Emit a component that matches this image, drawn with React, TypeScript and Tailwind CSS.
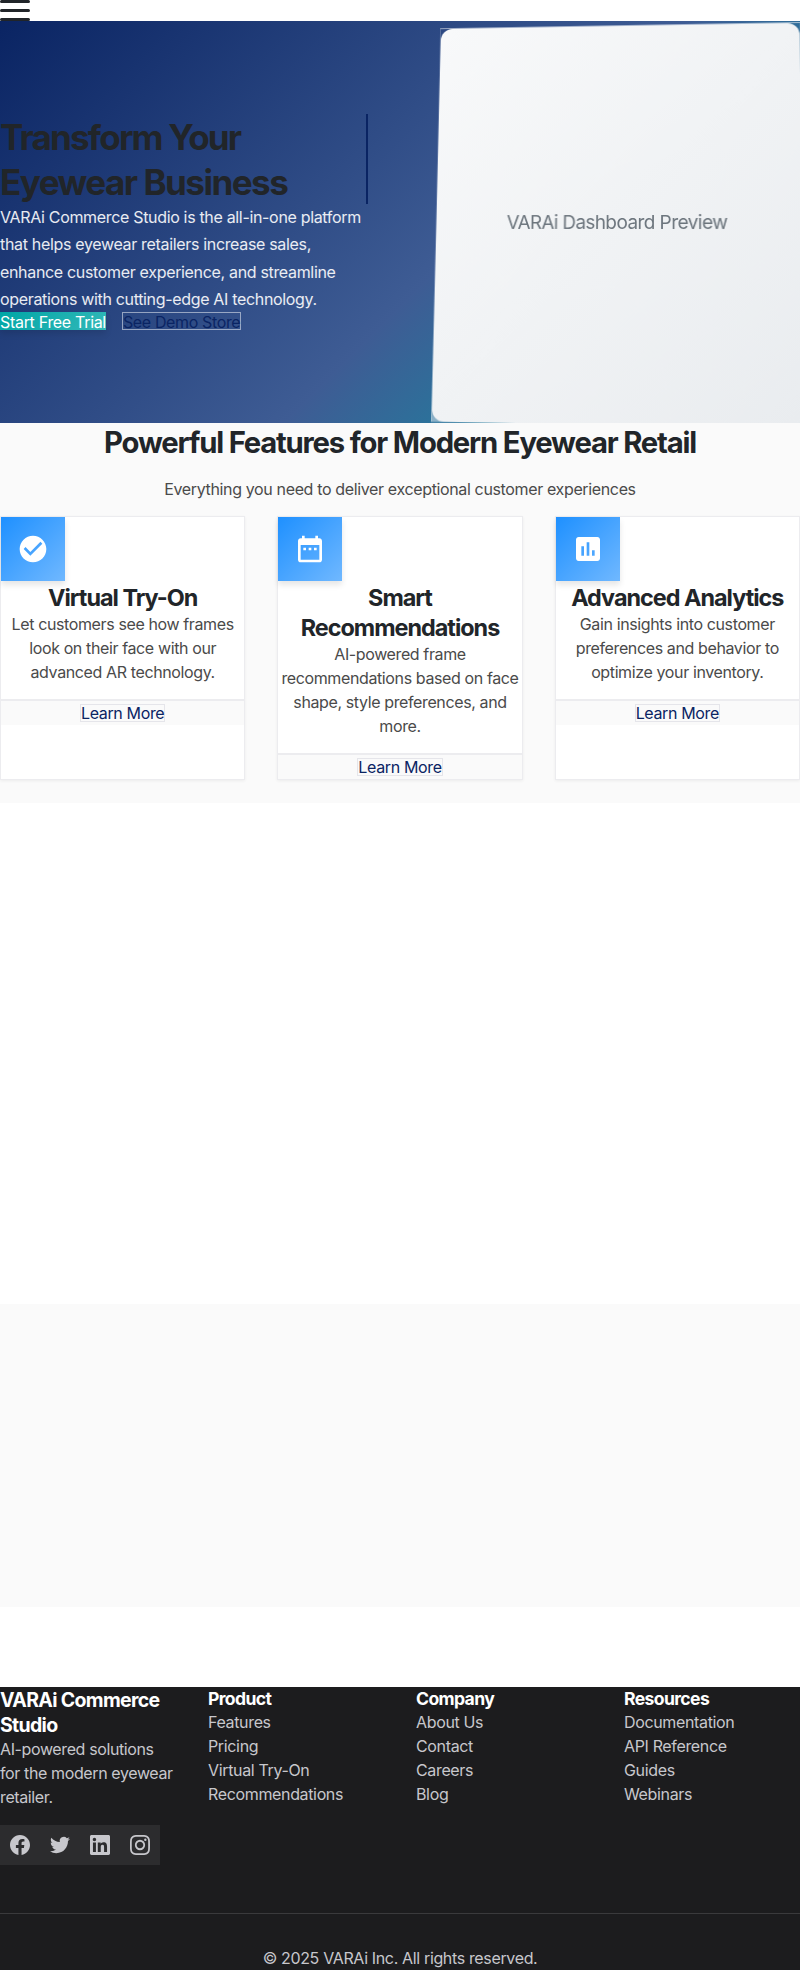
const features = [
  { title: ["Virtual Try-On"], text: ["Let customers see how frames", "look on their face with our", "advanced AR technology."], icon: "M12 2C6.48 2 2 6.48 2 12s4.48 10 10 10 10-4.48 10-10S17.52 2 12 2zm-2 15l-5-5 1.41-1.41L10 14.17l7.59-7.59L19 8l-9 9z" },
  { title: ["Smart", "Recommendations"], text: ["AI-powered frame", "recommendations based on face", "shape, style preferences, and", "more."], icon: "M9 11H7v2h2v-2zm4 0h-2v2h2v-2zm4 0h-2v2h2v-2zm2-7h-1V2h-2v2H8V2H6v2H5c-1.11 0-1.99.9-1.99 2L3 20c0 1.1.89 2 2 2h14c1.1 0 2-.9 2-2V6c0-1.1-.9-2-2-2zm0 16H5V9h14v11z" },
  { title: ["Advanced Analytics"], text: ["Gain insights into customer", "preferences and behavior to", "optimize your inventory."], icon: "M19 3H5c-1.1 0-2 .9-2 2v14c0 1.1.9 2 2 2h14c1.1 0 2-.9 2-2V5c0-1.1-.9-2-2-2zM9 17H7v-7h2v7zm4 0h-2V7h2v10zm4 0h-2v-4h2v4z" },
];

const columns = [
  { title: "Product", links: ["Features", "Pricing", "Virtual Try-On", "Recommendations"] },
  { title: "Company", links: ["About Us", "Contact", "Careers", "Blog"] },
  { title: "Resources", links: ["Documentation", "API Reference", "Guides", "Webinars"] },
];

const socials = [
  "M24 12.073c0-6.627-5.373-12-12-12s-12 5.373-12 12c0 5.99 4.388 10.954 10.125 11.854v-8.385H7.078v-3.47h3.047V9.43c0-3.007 1.792-4.669 4.533-4.669 1.312 0 2.686.235 2.686.235v2.953H15.83c-1.491 0-1.956.925-1.956 1.874v2.25h3.328l-.532 3.47h-2.796v8.385C19.612 23.027 24 18.062 24 12.073z",
  "M23.953 4.57a10 10 0 01-2.825.775 4.958 4.958 0 002.163-2.723c-.951.555-2.005.959-3.127 1.184a4.92 4.92 0 00-8.384 4.482C7.69 8.095 4.067 6.13 1.64 3.162a4.822 4.822 0 00-.666 2.475c0 1.71.87 3.213 2.188 4.096a4.904 4.904 0 01-2.228-.616v.06a4.923 4.923 0 003.946 4.827 4.996 4.996 0 01-2.212.085 4.936 4.936 0 004.604 3.417 9.867 9.867 0 01-6.102 2.105c-.39 0-.779-.023-1.17-.067a13.995 13.995 0 007.557 2.209c9.053 0 13.998-7.496 13.998-13.985 0-.21 0-.42-.015-.63A9.935 9.935 0 0024 4.59z",
  "M20.447 20.452h-3.554v-5.569c0-1.328-.027-3.037-1.852-3.037-1.853 0-2.136 1.445-2.136 2.939v5.667H9.351V9h3.414v1.561h.046c.477-.9 1.637-1.85 3.37-1.85 3.601 0 4.267 2.37 4.267 5.455v6.286zM5.337 7.433c-1.144 0-2.063-.926-2.063-2.065 0-1.138.92-2.063 2.063-2.063 1.14 0 2.064.925 2.064 2.063 0 1.139-.925 2.065-2.064 2.065zm1.782 13.019H3.555V9h3.564v11.452zM22.225 0H1.771C.792 0 0 .774 0 1.729v20.542C0 23.227.792 24 1.771 24h20.451C23.2 24 24 23.227 24 22.271V1.729C24 .774 23.2 0 22.222 0h.003z",
  "M12 0C8.74 0 8.333.015 7.053.072 5.775.132 4.905.333 4.14.63c-.789.306-1.459.717-2.126 1.384S.935 3.35.63 4.14C.333 4.905.131 5.775.072 7.053.012 8.333 0 8.74 0 12s.015 3.667.072 4.947c.06 1.277.261 2.148.558 2.913.306.788.717 1.459 1.384 2.126.667.666 1.336 1.079 2.126 1.384.766.296 1.636.499 2.913.558C8.333 23.988 8.74 24 12 24s3.667-.015 4.947-.072c1.277-.06 2.148-.262 2.913-.558.788-.306 1.459-.718 2.126-1.384.666-.667 1.079-1.335 1.384-2.126.296-.765.499-1.636.558-2.913.06-1.28.072-1.687.072-4.947s-.015-3.667-.072-4.947c-.06-1.277-.262-2.149-.558-2.913-.306-.789-.718-1.459-1.384-2.126C21.319 1.347 20.651.935 19.86.63c-.765-.297-1.636-.499-2.913-.558C15.667.012 15.26 0 12 0zm0 2.16c3.203 0 3.585.016 4.85.071 1.17.055 1.805.249 2.227.415.562.217.96.477 1.382.896.419.42.679.819.896 1.381.164.422.36 1.057.413 2.227.057 1.266.07 1.646.07 4.85s-.015 3.585-.074 4.85c-.061 1.17-.256 1.805-.421 2.227-.224.562-.479.96-.899 1.382-.419.419-.824.679-1.38.896-.42.164-1.065.36-2.235.413-1.274.057-1.649.07-4.859.07-3.211 0-3.586-.015-4.859-.074-1.171-.061-1.816-.256-2.236-.421-.569-.224-.96-.479-1.379-.899-.421-.419-.69-.824-.9-1.38-.165-.42-.359-1.065-.42-2.235-.045-1.26-.061-1.649-.061-4.844 0-3.196.016-3.586.061-4.861.061-1.17.255-1.814.42-2.234.21-.57.479-.96.9-1.381.419-.419.81-.689 1.379-.898.42-.166 1.051-.361 2.221-.421 1.275-.045 1.65-.06 4.859-.06l.045.03zm0 3.678a6.162 6.162 0 100 12.324 6.162 6.162 0 100-12.324zM12 16c-2.21 0-4-1.79-4-4s1.79-4 4-4 4 1.79 4 4-1.79 4-4 4zm7.846-10.405a1.441 1.441 0 11-2.88 0 1.441 1.441 0 012.88 0z",
];

function Lines({ lines }: { lines: string[] }) {
  return (
    <>
      {lines.map((l) => (
        <span key={l} className="block whitespace-nowrap">{l}</span>
      ))}
    </>
  );
}

export default function App() {
  return (
    <div className="h-[1986px] overflow-hidden bg-white font-['Inter','Liberation_Sans',sans-serif] text-base tracking-[-0.35px] text-[#4a4a4a]">
      <header className="flex h-[21px] flex-col justify-between">
        <span className="h-[3px] w-[30px] rounded-[3px] bg-[#212529]" />
        <span className="h-[3px] w-[30px] rounded-[3px] bg-[#212529]" />
        <span className="h-[3px] w-[30px] rounded-[3px] bg-[#212529]" />
      </header>

      <section className="grid h-[402px] grid-cols-2 items-center gap-16 overflow-hidden bg-[linear-gradient(135deg,#0a2463_0%,#3e5c94_57%,#00a6aa_100%)]">
        <div className="flex flex-col">
          <h1 className="h-[90px] border-r-2 border-[#0a2463] pt-px text-[35px] leading-[45px] font-bold tracking-[-1.5px] text-[#212529]">
            <span className="block tracking-[-1.8px]">Transform Your</span>
            <span className="block">Eyewear Business</span>
          </h1>
          <p className="-mb-[0.5px] pt-[0.5px] leading-[27.2px] tracking-[-0.33px] text-white/90">
            <Lines lines={["VARAi Commerce Studio is the all-in-one platform", "that helps eyewear retailers increase sales,", "enhance customer experience, and streamline", "operations with cutting-edge AI technology."]} />
          </p>
          <div className="flex gap-4 tracking-[-0.31px]">
            <a className="h-[18px] bg-[linear-gradient(135deg,#00a6a6,#33b8b8)] leading-5 text-white shadow-[0_4px_6px_rgba(0,0,0,0.1)]">Start Free Trial</a>
            <a className="h-[18px] border border-white/50 leading-[18px] tracking-[-0.36px] text-[#0a2463]">See Demo Store</a>
          </div>
        </div>
        <div className="h-[402px] border border-white/20 bg-[linear-gradient(to_top,rgba(255,255,255,0.45),transparent_50%)] [transform:perspective(1000px)_rotateY(-5deg)_rotateX(5deg)]">
          <div className="flex h-[400px] items-center justify-center rounded-xl bg-[linear-gradient(135deg,#f8f9fa,#e9ecef)] pt-[2px] text-[19px] tracking-[-0.58px] text-[#6c757d]">VARAi Dashboard Preview</div>
        </div>
      </section>

      <section className="h-[380px] bg-[#fafafa] text-center">
        <h2 className="pt-px text-[29.25px] leading-[38px] font-bold tracking-[-1.19px] text-[#212529]">Powerful Features for Modern Eyewear Retail</h2>
        <p className="pt-[15px] leading-6 tracking-[-0.36px]">Everything you need to deliver exceptional customer experiences</p>
        <div className="mt-[15px] grid h-[263px] grid-cols-3 gap-8">
          {features.map((f) => (
            <article key={f.title[0]} className="border border-[#ececef] bg-white shadow-[0_1px_3px_rgba(0,0,0,0.06)]">
              <div className="flex size-16 items-center justify-center bg-[linear-gradient(135deg,#1e90ff,#70b8ff)] text-white shadow-[0_4px_6px_rgba(0,0,0,0.1)]">
                <svg viewBox="0 0 24 24" className="size-8" fill="currentColor"><path d={f.icon} /></svg>
              </div>
              <h3 className="-mb-px pt-[2px] text-[23.4px] leading-[30px] font-bold tracking-[-1px] text-[#212529]"><Lines lines={f.title} /></h3>
              <p className="flex flex-col items-center leading-6 tracking-[-0.38px]"><Lines lines={f.text} /></p>
              <div className="mt-[15px] flex h-[26px] items-center justify-center border-t-2 border-[#ececef] bg-[#fafafa]">
                <a className="h-[18px] border border-[#e5e5ea] leading-[17px] text-[#0a2463]">Learn More</a>
              </div>
            </article>
          ))}
        </div>
      </section>

      <section className="h-[501px]" />
      <section className="h-[303px] bg-[#fafafa]" />

      <footer className="mt-20 h-[283px] bg-[#1c1c1e] text-[#c7c7cc]">
        <div className="grid h-[178px] grid-cols-4 gap-8">
          <div>
            <h4 className="-mb-px pt-px text-[19.5px] leading-[25px] font-bold tracking-[-0.68px] text-white"><Lines lines={["VARAi Commerce", "Studio"]} /></h4>
            <p className="leading-6 tracking-[-0.38px]"><Lines lines={["AI-powered solutions", "for the modern eyewear", "retailer."]} /></p>
            <div className="mt-4 flex">
              {socials.map((d) => (
                <a key={d} className="flex size-10 items-center justify-center bg-[#2c2c2e]">
                  <svg viewBox="0 0 24 24" className="size-5" fill="currentColor"><path d={d} /></svg>
                </a>
              ))}
            </div>
          </div>
          {columns.map((c) => (
            <div key={c.title}>
              <h5 className="-mb-px pt-px text-[17.6px] leading-[22.5px] font-bold tracking-[-0.63px] text-white">{c.title}</h5>
              <ul className="leading-6">
                {c.links.map((l) => <li key={l}>{l}</li>)}
              </ul>
            </div>
          ))}
        </div>
        <div className="mt-12 border-t border-[#3a3a3c] pt-8 text-center leading-6">© 2025 VARAi Inc. All rights reserved.</div>
      </footer>
    </div>
  );
}
